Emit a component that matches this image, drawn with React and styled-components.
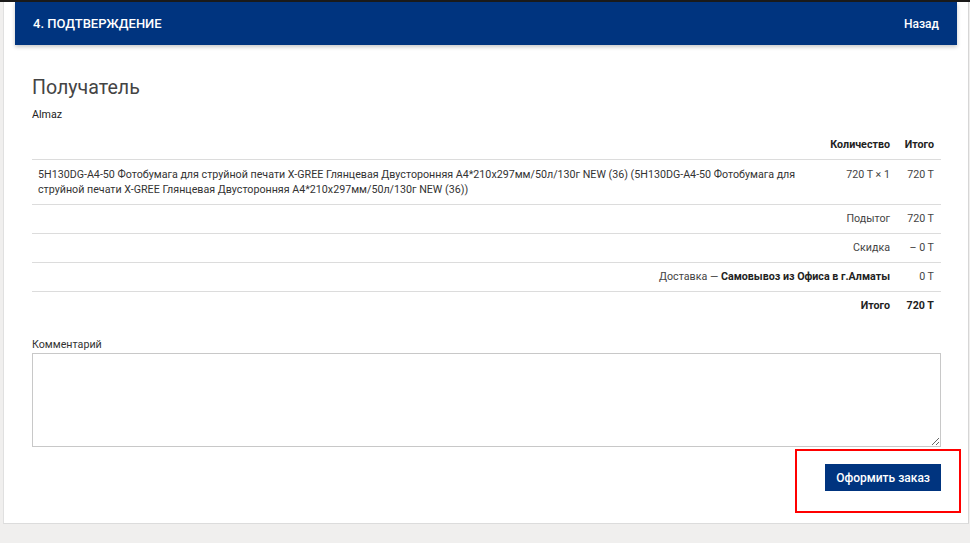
import React from 'react'
import styled, { createGlobalStyle } from 'styled-components'

const GlobalStyle = createGlobalStyle`
  html, body {
    margin: 0;
    padding: 0;
    background: #f0efee;
    font-family: Roboto, "Noto Sans", "Liberation Sans", sans-serif;
    color: #333;
  }
  * { box-sizing: border-box; }
`

const rows = [
  { label: 'Подытог', value: '720 Т' },
  { label: 'Скидка', value: '– 0 Т' },
  { label: 'Доставка', extra: 'Самовывоз из Офиса в г.Алматы', value: '0 Т' },
]

const App = () => {
  return (
    <>
      <GlobalStyle />
      <Page>
        <Panel>
          <Header>
            <Title>4. Подтверждение</Title>
            <Back href="#">Назад</Back>
          </Header>

          <Body>
            <Heading>Получатель</Heading>
            <Name>Almaz</Name>

            <Table>
              <thead>
                <tr>
                  <Th></Th>
                  <Th>Количество</Th>
                  <Th>Итого</Th>
                </tr>
              </thead>
              <tbody>
                <tr>
                  <ProductCell>
                    5H130DG-A4-50 Фотобумага для струйной печати X-GREE Глянцевая Двусторонняя A4*210x297мм/50л/130г NEW (36) (5H130DG-A4-50 Фотобумага для струйной печати X-GREE Глянцевая Двусторонняя A4*210x297мм/50л/130г NEW (36))
                  </ProductCell>
                  <Td $top>720 Т × 1</Td>
                  <Td $top>720 Т</Td>
                </tr>
                {rows.map(r => (
                  <tr key={r.label}>
                    <Td colSpan={2}>
                      {r.label}
                      {r.extra && <> — <strong>{r.extra}</strong></>}
                    </Td>
                    <Td>{r.value}</Td>
                  </tr>
                ))}
                <tr>
                  <Td colSpan={2} $bold>Итого</Td>
                  <Td $bold>720 Т</Td>
                </tr>
              </tbody>
            </Table>

            <Label>Комментарий</Label>
            <Comment />

            <Actions>
              <Submit>Оформить заказ</Submit>
              <Highlight />
            </Actions>
          </Body>
        </Panel>
      </Page>
    </>
  )
}

export default App

const Page = styled.div`
  width: 970px;
  height: 543px;
  border-top: 2px solid #1a1a1a;
  background: #f0efee;
  overflow: hidden;
`

const Panel = styled.div`
  margin-left: 3px;
  width: 966px;
  height: 522px;
  background: #fff;
  border-left: 1px solid #e0e0e0;
  border-right: 1px solid #d6d6d6;
  border-bottom: 1px solid #dcdcdc;
`

const Header = styled.div`
  margin: 0 11px 0 11px;
  height: 43px;
  background: #00347f;
  display: flex;
  align-items: center;
  justify-content: space-between;
  padding: 0 18px 0 18px;
  box-shadow: 0 2px 4px rgba(0, 0, 0, 0.22);
`

const Title = styled.div`
  color: #fff;
  font-size: 13px;
  font-weight: 500;
  text-transform: uppercase;
`

const Back = styled.a`
  color: #fff;
  font-size: 12px;
  font-weight: 500;
  text-decoration: none;
`

const Body = styled.div`
  padding: 31px 28px 0 28px;
`

const Heading = styled.h2`
  margin: 0;
  font-size: 19.6px;
  font-weight: 400;
  color: #444;
  line-height: 24px;
`

const Name = styled.div`
  margin-top: 8px;
  font-size: 10.7px;
  color: #222;
`

const Table = styled.table`
  margin-top: 10px;
  width: 909px;
  border-collapse: collapse;
  font-size: 10.7px;
  color: #333;

  tbody tr {
    border-top: 1px solid #dcdcdc;
  }

  strong {
    color: #222;
    font-weight: 700;
  }
`

const Th = styled.th`
  text-align: right;
  font-weight: 700;
  color: #222;
  height: 28px;
  padding: 0 7px;
  white-space: nowrap;
`

const Td = styled.td`
  text-align: right;
  height: 29px;
  padding: ${p => (p.$top ? '7px 7px 0' : '0 7px')};
  vertical-align: ${p => (p.$top ? 'top' : 'middle')};
  line-height: 15px;
  white-space: nowrap;
  font-weight: ${p => (p.$bold ? 700 : 400)};
  color: ${p => (p.$bold ? '#222' : '#444')};
`

const ProductCell = styled.td`
  width: 790px;
  padding: 7px 6px 7px 6px;
  line-height: 15px;
  color: #333;
`

const Label = styled.div`
  margin-top: 18px;
  font-size: 10.7px;
  color: #333;
`

const Comment = styled.textarea`
  display: block;
  margin-top: 2px;
  width: 909px;
  height: 94px;
  border: 1px solid #c8c8c8;
  resize: vertical;
  font-family: inherit;
`

const Actions = styled.div`
  position: relative;
  display: flex;
  justify-content: flex-end;
  width: 909px;
  padding-top: 17px;
`

const Submit = styled.button`
  height: 27px;
  padding: 0 11px;
  background: #00347f;
  color: #fff;
  border: none;
  font-family: inherit;
  font-size: 12px;
  font-weight: 500;
  cursor: pointer;
`

const Highlight = styled.div`
  position: absolute;
  left: 763px;
  top: 2px;
  width: 166px;
  height: 64px;
  border: 2px solid #ff0000;
  pointer-events: none;
`
